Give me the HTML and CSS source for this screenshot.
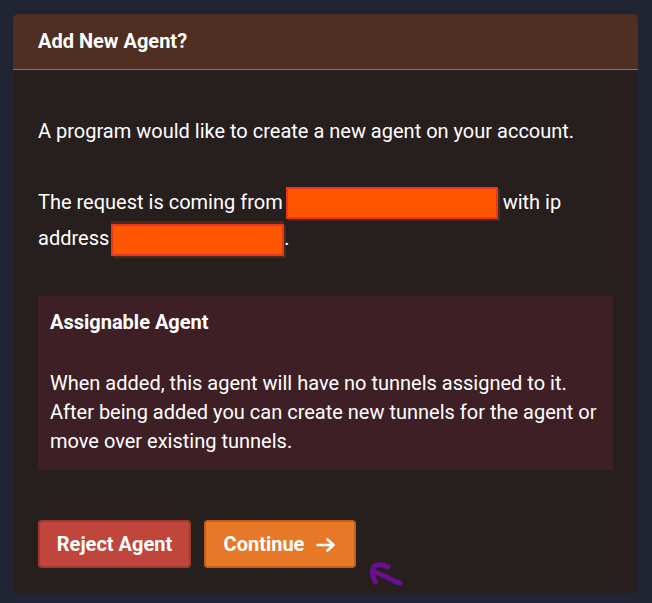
FILE: index.html
```html
<!DOCTYPE html>
<html>
<head>
<meta charset="utf-8">
<link rel="stylesheet" href="styles.css">
</head>
<body>
<div class="card">
  <div class="card-header">Add New Agent?</div>
  <div class="card-body">
    <p class="para first">A program would like to create a new agent on your account.</p>
    <p class="para">The request is coming from<span class="redact redact-a"></span> with ip address<span class="redact redact-b"></span>.</p>
    <div class="notice">
      <div class="notice-title">Assignable Agent</div>
      <div class="notice-text">When added, this agent will have no tunnels assigned to it. After being added you can create new tunnels for the agent or move over existing tunnels.</div>
    </div>
    <div class="actions">
      <button class="btn btn-reject">Reject Agent</button>
      <button class="btn btn-continue">Continue
        <svg class="arrow" width="20" height="14" viewBox="0 0 20 14">
          <path d="M1.5 7 H17.5 M11.5 1.5 L17.5 7 L11.5 12.5" fill="none" stroke="#ffffff" stroke-width="2.6" stroke-linecap="round" stroke-linejoin="round"/>
        </svg>
      </button>
      <svg class="doodle" width="40" height="30" viewBox="0 0 40 30">
        <path d="M7.5 22 C4 17 3.5 11 5.5 7.5 C7.5 4.5 13 3.5 20 7" fill="none" stroke="#6a0f8f" stroke-width="5" stroke-linecap="round"/>
        <path d="M7 12 C12 14 17 16 20 18 C24 20 28 22 32 23" fill="none" stroke="#6a0f8f" stroke-width="5" stroke-linecap="round"/>
      </svg>
    </div>
  </div>
</div>
</body>
</html>
```
FILE: styles.css
```css
html, body {
  margin: 0;
  padding: 0;
  background: #212533;
}
body {
  padding: 14px 14px 10px 13px;
  font-family: Roboto, "Liberation Sans", sans-serif;
  color: #ffffff;
}
.card {
  width: 625px;
  height: 579px;
  background: #271e1e;
  border-radius: 5px;
  overflow: hidden;
  display: flex;
  flex-direction: column;
}
.card-header {
  height: 56px;
  background: #4e2f22;
  border-bottom: 1px solid #b36638;
  box-sizing: border-box;
  padding: 0 25px 2px 25px;
  display: flex;
  align-items: center;
  font-weight: 700;
  font-size: 20px;
}
.card-body {
  padding: 43px 25px 0 25px;
  display: flex;
  flex-direction: column;
}
.para {
  margin: 0 0 35px 0;
  font-size: 20px;
  line-height: 36px;
}
.para + .para {
  margin-bottom: 40px;
}
.redact {
  display: inline-block;
  vertical-align: middle;
  height: 32px;
  box-sizing: border-box;
  background: #ff5500;
  border: 2px solid #e33a1f;
  box-shadow: 2px 2px 0 #4a2b22;
}
.redact-a {
  width: 212px;
  margin-left: 3px;
  margin-top: -2px;
}
.redact-b {
  width: 173px;
  margin-left: 2px;
  box-shadow: 0 -3px 0 #4a2b22, 2px 2px 0 #4a2b22;
}
.notice {
  background: #3e1f26;
  padding: 12px 12px 14px 12px;
}
.notice-title {
  font-weight: 700;
  font-size: 20px;
  line-height: 29px;
  margin-bottom: 32px;
}
.notice-text {
  font-size: 20px;
  line-height: 29px;
}
.actions {
  margin-top: 50px;
  display: flex;
  gap: 13px;
  position: relative;
}
.btn {
  height: 48px;
  box-sizing: border-box;
  border-radius: 4px;
  font-family: Roboto, "Liberation Sans", sans-serif;
  font-weight: 700;
  font-size: 20px;
  color: #ffffff;
  padding: 0;
  display: flex;
  align-items: center;
  justify-content: center;
}
.btn-reject {
  width: 153px;
  background: #c0453a;
  border: 2px solid #9e3a31;
}
.btn-continue {
  width: 152px;
  background: #e67827;
  border: 2px solid #c25f1f;
}
.arrow {
  margin-left: 12px;
  margin-top: 1px;
}
.doodle {
  position: absolute;
  left: 330px;
  top: 40px;
}
```
